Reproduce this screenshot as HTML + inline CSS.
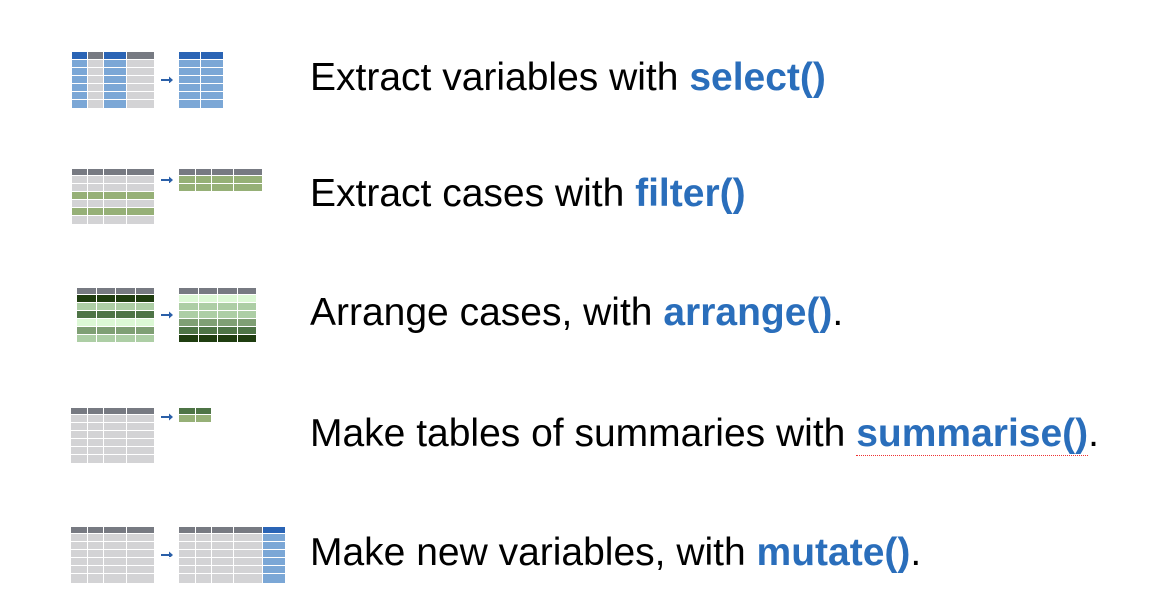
<!DOCTYPE html>
<html><head><meta charset="utf-8"><style>
html,body{margin:0;padding:0;background:#fff;width:1154px;height:616px;overflow:hidden}
svg{position:absolute;left:0;top:0}
.t{position:absolute;left:310px;font-family:"Liberation Sans",Arial,sans-serif;font-size:39px;color:#000;white-space:nowrap;line-height:1}
.t b{color:#2a6ebb}
.u{border-bottom:1px dotted #e33;}
</style></head><body>
<svg width="1154" height="616" viewBox="0 0 1154 616">
<g fill="#2a5fa8">
<path d="M161,79h8v-2.5l4,3.5l-4,3.5v-2.5h-8z"/>
<path d="M161,179h8v-2.5l4,3.5l-4,3.5v-2.5h-8z"/>
<path d="M161,314h8v-2.5l4,3.5l-4,3.5v-2.5h-8z"/>
<path d="M161,416h8v-2.5l4,3.5l-4,3.5v-2.5h-8z"/>
<path d="M161,554h8v-2.5l4,3.5l-4,3.5v-2.5h-8z"/>
</g>
<rect x="72" y="52" width="16" height="7" fill="#2a64b5"/><rect x="88" y="52" width="16" height="7" fill="#777a82"/><rect x="104" y="52" width="23" height="7" fill="#2a64b5"/><rect x="127" y="52" width="27" height="7" fill="#777a82"/>
<rect x="72" y="60" width="16" height="48" fill="#7ba7d6"/><rect x="88" y="60" width="16" height="48" fill="#d3d3d5"/><rect x="104" y="60" width="23" height="48" fill="#7ba7d6"/><rect x="127" y="60" width="27" height="48" fill="#d3d3d5"/>
<rect x="179" y="52" width="44" height="7" fill="#2a64b5"/><rect x="179" y="60" width="44" height="48" fill="#7ba7d6"/>
<g fill="#fff"><rect x="87" y="52" width="1" height="56"/><rect x="103" y="52" width="1" height="56"/><rect x="126" y="52" width="1" height="56"/><rect x="200" y="52" width="1" height="56"/>
<rect x="70" y="67" width="160" height="1"/><rect x="70" y="75" width="160" height="1"/><rect x="70" y="83" width="160" height="1"/><rect x="70" y="91" width="160" height="1"/><rect x="70" y="99" width="160" height="1"/></g>
<rect x="72" y="169" width="82" height="6" fill="#777a82"/><rect x="72" y="176" width="82" height="48" fill="#d3d3d5"/>
<rect x="72" y="192" width="82" height="7" fill="#96b077"/><rect x="72" y="208" width="82" height="7" fill="#96b077"/>
<rect x="179" y="169" width="83" height="6" fill="#777a82"/><rect x="179" y="176" width="83" height="15" fill="#96b077"/>
<g fill="#fff"><rect x="87" y="169" width="1" height="55"/><rect x="103" y="169" width="1" height="55"/><rect x="126" y="169" width="1" height="55"/>
<rect x="195" y="169" width="1" height="22"/><rect x="211" y="169" width="1" height="22"/><rect x="233" y="169" width="1" height="22"/>
<rect x="70" y="183" width="200" height="1"/><rect x="70" y="191" width="90" height="1"/><rect x="70" y="199" width="90" height="1"/><rect x="70" y="207" width="90" height="1"/><rect x="70" y="215" width="90" height="1"/></g>
<rect x="77" y="288" width="77" height="6" fill="#777a82"/>
<rect x="77" y="295" width="77" height="7" fill="#1f3d10"/><rect x="77" y="303" width="77" height="7" fill="#adcea5"/><rect x="77" y="311" width="77" height="7" fill="#4e7446"/><rect x="77" y="319" width="77" height="7" fill="#dcf8d5"/><rect x="77" y="327" width="77" height="7" fill="#7f9f74"/><rect x="77" y="335" width="77" height="7" fill="#adcea5"/>
<rect x="179" y="288" width="77" height="6" fill="#777a82"/>
<rect x="179" y="295" width="77" height="7" fill="#dcf8d5"/><rect x="179" y="303" width="77" height="7" fill="#adcea5"/><rect x="179" y="311" width="77" height="7" fill="#adcea5"/><rect x="179" y="319" width="77" height="7" fill="#7f9f74"/><rect x="179" y="327" width="77" height="7" fill="#4e7446"/><rect x="179" y="335" width="77" height="7" fill="#1f3d10"/>
<g fill="#fff"><rect x="96" y="288" width="1" height="54"/><rect x="115" y="288" width="1" height="54"/><rect x="135" y="288" width="1" height="54"/>
<rect x="198" y="288" width="1" height="54"/><rect x="217" y="288" width="1" height="54"/><rect x="237" y="288" width="1" height="54"/></g>
<rect x="71" y="408" width="83" height="6" fill="#777a82"/><rect x="71" y="415" width="83" height="48" fill="#d3d3d5"/>
<rect x="179" y="408" width="32" height="6" fill="#4e7446"/><rect x="179" y="415" width="32" height="7" fill="#96b077"/>
<g fill="#fff"><rect x="87" y="408" width="1" height="55"/><rect x="103" y="408" width="1" height="55"/><rect x="126" y="408" width="1" height="55"/><rect x="195" y="408" width="1" height="14"/>
<rect x="70" y="422" width="90" height="1"/><rect x="70" y="430" width="90" height="1"/><rect x="70" y="438" width="90" height="1"/><rect x="70" y="446" width="90" height="1"/><rect x="70" y="454" width="90" height="1"/></g>
<rect x="71" y="527" width="83" height="6" fill="#777a82"/><rect x="71" y="534" width="83" height="49" fill="#d3d3d5"/>
<rect x="179" y="527" width="84" height="6" fill="#777a82"/><rect x="179" y="534" width="84" height="49" fill="#d3d3d5"/>
<rect x="263" y="527" width="22" height="6" fill="#2a64b5"/><rect x="263" y="534" width="22" height="49" fill="#7ba7d6"/>
<g fill="#fff"><rect x="87" y="527" width="1" height="56"/><rect x="103" y="527" width="1" height="56"/><rect x="126" y="527" width="1" height="56"/>
<rect x="195" y="527" width="1" height="56"/><rect x="211" y="527" width="1" height="56"/><rect x="233" y="527" width="1" height="56"/><rect x="262" y="527" width="1" height="56"/>
<rect x="70" y="541" width="220" height="1"/><rect x="70" y="549" width="220" height="1"/><rect x="70" y="557" width="220" height="1"/><rect x="70" y="565" width="220" height="1"/><rect x="70" y="573" width="220" height="1"/></g>
</svg>
<div class="t" style="top:58px">Extract variables with <b>select()</b></div>
<div class="t" style="top:174px">Extract cases with <b>filter()</b></div>
<div class="t" style="top:293px">Arrange cases, with <b>arrange()</b>.</div>
<div class="t" style="top:414px">Make tables of summaries with <b class="u">summarise()</b>.</div>
<div class="t" style="top:533px">Make new variables, with <b>mutate()</b>.</div>
</body></html>
